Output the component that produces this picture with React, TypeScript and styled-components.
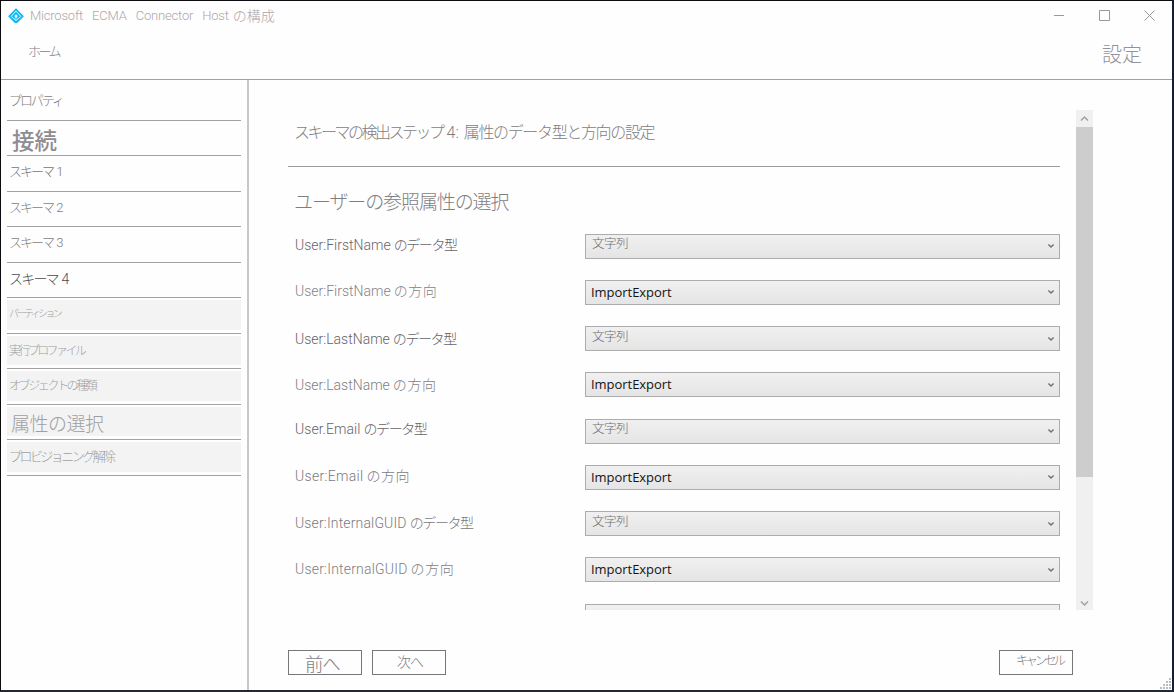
import React from 'react';
import styled, { createGlobalStyle } from 'styled-components';

const GlobalStyle = createGlobalStyle`
  * { box-sizing: border-box; }
  body { margin: 0; background: #fff; overflow: hidden; }
`;

const Window = styled.div`
  width: 1174px;
  height: 692px;
  display: flex;
  flex-direction: column;
  background: #fefefe;
  border-style: solid;
  border-width: 1px 2px 2px 1px;
  border-color: #0c0c10 #14202f #232833 #0c0c10;
  font-family: Roboto, 'Noto Sans CJK JP', sans-serif;
  color: #7f7d81;
  position: relative;
  overflow: hidden;
`;

const TitleBar = styled.header`
  display: flex;
  align-items: center;
  height: 30px;
  padding-left: 7px;
  flex: none;
`;

const AppTitle = styled.h1`
  flex: 1;
  display: flex;
  margin: 0 0 0 6px;
  font-size: 13px;
  font-weight: 300;
  line-height: 20px;
  word-spacing: 1.6px;
  color: #aea6ab;
  white-space: pre;
`;

const Caption = styled.div`
  display: flex;
  width: 135px;
  height: 28px;
  margin-bottom: 2px;
  align-items: center;
  justify-content: space-around;
`;

const MenuBar = styled.nav`
  display: flex;
  justify-content: space-between;
  height: 49px;
  padding: 0 30px 0 27px;
  border-bottom: 1px solid #a0a0a0;
  flex: none;
`;

const MenuItem = styled.span<{ $size: number; $top: number; $gap?: number; $tone: string }>`
  font-size: ${(p) => p.$size}px;
  font-weight: 300;
  line-height: 24px;
  padding-top: ${(p) => p.$top}px;
  letter-spacing: ${(p) => p.$gap ?? 0}px;
  color: ${(p) => p.$tone};
`;

const Body = styled.div`
  display: flex;
  flex: 1;
  min-height: 0;
`;

const Sidebar = styled.aside`
  width: 248px;
  padding: 5px 6px 0 6px;
  border-right: 2px solid #c8c8c8;
  flex: none;
`;

const Step = styled.div<{ $disabled?: boolean }>`
  height: 35.5px;
  border-bottom: 1px solid #a2a2a2;
  padding: ${(p) => (p.$disabled ? '2px 0 3px' : '0')};
  background: ${(p) => (p.$disabled ? '#f3f3f3' : 'transparent')};
  background-clip: content-box;
`;

const StepText = styled.div<{
  $size: number;
  $gap: number;
  $left: number;
  $lift: number;
  $tone: string;
  $bold?: boolean;
}>`
  height: 30px;
  line-height: ${(p) => 32 - p.$lift * 2}px;
  padding-left: ${(p) => p.$left}px;
  font-size: ${(p) => p.$size}px;
  font-weight: ${(p) => (p.$bold ? 500 : 300)};
  letter-spacing: ${(p) => p.$gap}px;
  word-spacing: 2px;
  color: ${(p) => p.$tone};
  white-space: pre;
`;

const Main = styled.main`
  flex: 1;
  padding: 30px 80px 0 39px;
  display: flex;
  flex-direction: column;
`;

const ScrollArea = styled.section`
  display: flex;
  height: 500px;
  width: 805px;
  flex: none;
`;

const Page = styled.div`
  width: 772px;
  height: 500px;
  overflow: hidden;
  margin-right: 16px;
`;

const PageTitle = styled.h2`
  display: flex;
  margin: 0;
  height: 57px;
  padding-left: 6px;
  line-height: 45px;
  font-size: 16px;
  font-weight: 300;
  white-space: pre;
  border-bottom: 1px solid #9c9c9c;
`;

const SectionTitle = styled.h3`
  margin: 0;
  height: 56px;
  padding: 16px 0 0 6px;
  line-height: 40px;
  font-size: 19px;
  font-weight: 300;
  letter-spacing: -1.1px;
`;

const Run = styled.span<{ $gap?: number; $left?: number; $size?: number }>`
  letter-spacing: ${(p) => p.$gap ?? 0}px;
  margin-left: ${(p) => p.$left ?? 0}px;
  ${(p) => (p.$size ? `font-size: ${p.$size}px;` : '')}
`;

const Field = styled.div`
  display: flex;
  align-items: center;
  height: 46.25px;
  padding-left: 7px;
`;

const FieldLabel = styled.label<{ $lift: number; $tone: string }>`
  display: flex;
  width: 290px;
  line-height: 20px;
  padding-bottom: ${(p) => p.$lift * 2}px;
  font-size: 14px;
  font-weight: 300;
  color: ${(p) => p.$tone};
  white-space: pre;
`;

const Combo = styled.div`
  display: flex;
  align-items: center;
  justify-content: space-between;
  width: 475px;
  height: 25px;
  padding: 0 4px 0 5px;
  border: 1px solid #acacac;
  background: linear-gradient(#f0f0f0, #e5e5e5);
`;

const TypeValue = styled.span`
  font-size: 12.5px;
  font-weight: 300;
  letter-spacing: -0.5px;
  line-height: 18px;
  padding: 0 0 4px 1px;
  color: #6d6b6f;
`;

const DirectionValue = styled.span`
  font-family: 'Open Sans', 'Noto Sans', sans-serif;
  font-size: 13px;
  letter-spacing: -0.04px;
  line-height: 20px;
  padding-bottom: 1px;
  color: #141414;
`;

const ScrollBar = styled.div`
  width: 17px;
  height: 500px;
  display: flex;
  flex-direction: column;
  background: #f0f0f0;
`;

const ScrollButton = styled.div<{ $drop?: number }>`
  height: 17px;
  padding-top: ${(p) => p.$drop ?? 0}px;
  display: flex;
  align-items: center;
  justify-content: center;
`;

const Thumb = styled.div`
  height: 350px;
  background: #cdcdcd;
`;

const Track = styled.div`
  flex: 1;
`;

const Footer = styled.footer`
  display: flex;
  gap: 10px;
  padding-top: 40px;
  width: 785px;
`;

const Button = styled.button<{ $size: number; $gap?: number; $left: number; $top: number; $end?: boolean }>`
  width: 74px;
  height: 25px;
  margin: 0 0 0 ${(p) => (p.$end ? 'auto' : '0')};
  padding: ${(p) => p.$top}px 0 0 ${(p) => p.$left}px;
  border: 1px solid #77777a;
  background: #fefefe;
  display: flex;
  align-items: flex-start;
  font-family: inherit;
  font-size: ${(p) => p.$size}px;
  font-weight: 300;
  line-height: 20px;
  letter-spacing: ${(p) => p.$gap ?? 0}px;
  color: #7f7d81;
  white-space: nowrap;
`;

const Grip = styled.svg`
  position: absolute;
  right: 1px;
  bottom: 1px;
`;

type StepData = {
  text: string;
  size: number;
  gap: number;
  left: number;
  lift: number;
  tone: string;
  bold?: boolean;
  disabled?: boolean;
};

const steps: StepData[] = [
  { text: 'プロパティ', size: 13, gap: -2.1, left: 2, lift: 0, tone: '#7f7d81' },
  { text: '接続', size: 22.5, gap: 0, left: 5, lift: -4, tone: '#8f8c92', bold: true },
  { text: 'スキーマ 1', size: 13, gap: -2, left: 2, lift: 0, tone: '#757377' },
  { text: 'スキーマ 2', size: 13, gap: -2, left: 2, lift: 0, tone: '#7f7d81' },
  { text: 'スキーマ 3', size: 13, gap: -2, left: 2, lift: 0, tone: '#7f7d81' },
  { text: 'スキーマ 4', size: 14, gap: -1.8, left: 2, lift: 0, tone: '#4c4a4e' },
  { text: 'パーティション', size: 10, gap: -2.6, left: 2, lift: 2, tone: '#a09ea2', disabled: true },
  { text: '実行プロファイル', size: 12, gap: -2.6, left: 2, lift: 1, tone: '#a09ea2', disabled: true },
  { text: 'オブジェクトの種類', size: 12, gap: -2.4, left: 2, lift: 1, tone: '#a09ea2', disabled: true },
  { text: '属性の選択', size: 19, gap: -0.5, left: 4, lift: -2, tone: '#a09ea2', disabled: true },
  { text: 'プロビジョニング解除', size: 13, gap: -2.55, left: 2, lift: 1, tone: '#a09ea2', disabled: true },
];

type FieldData = { name: string; gap: number; kind: 'type' | 'direction'; lift: number; tone: string };

const fields: FieldData[] = [
  { name: 'User:FirstName', gap: 0, kind: 'type', lift: 1, tone: '#67656a' },
  { name: 'User:FirstName', gap: 0, kind: 'direction', lift: 1, tone: '#858387' },
  { name: 'User:LastName', gap: 0, kind: 'type', lift: 0, tone: '#656367' },
  { name: 'User:LastName', gap: 0, kind: 'direction', lift: 0, tone: '#7f7d81' },
  { name: 'User.Email', gap: 0.05, kind: 'type', lift: 2, tone: '#656367' },
  { name: 'User:Email', gap: 0.3, kind: 'direction', lift: 1, tone: '#7b797d' },
  { name: 'User:InternalGUID', gap: 0.15, kind: 'type', lift: 0.5, tone: '#7b797d' },
  { name: 'User:InternalGUID', gap: 0.2, kind: 'direction', lift: 0.5, tone: '#7f7d81' },
];

const Logo = () => (
  <svg width="16" height="16" viewBox="0 0 16 16">
    <path d="M8 .3 15.9 8.2 10 14.3Q8 16 6 14.3L.1 8.2Z" fill="#12b8f0" />
    <path d="M8 3 12.8 8.4 8 12.4 3.2 8.4Z" fill="none" stroke="#d8f6ff" strokeWidth="1" />
    <path d="M8 9V12.4" stroke="#d8f6ff" strokeWidth=".8" />
    <circle cx="8" cy="7.9" r="1.5" fill="#d8f6ff" />
  </svg>
);

const Arrow = () => (
  <svg width="8" height="6" viewBox="0 0 8 6">
    <path d="M1.4 1.5 4 4 6.6 1.5" fill="none" stroke="#707070" strokeWidth="1.4" />
  </svg>
);

const Chevron = ({ up }: { up?: boolean }) => (
  <svg width="9" height="7" viewBox="0 0 9 7">
    <path d={up ? 'M1 5.5 4.5 2 8 5.5' : 'M1 1.5 4.5 5 8 1.5'} fill="none" stroke="#a0a0a0" strokeWidth="1.5" />
  </svg>
);

export default function App() {
  return (
    <>
      <GlobalStyle />
      <Window>
        <TitleBar>
          <Logo />
          <AppTitle>
            <Run $gap={-0.2}>{'Microsoft  ECMA  Connector  Host'}</Run>
            <Run $size={14} $left={4}>の構成</Run>
          </AppTitle>
          <Caption>
            <svg width="11" height="11"><path d="M0 5.5H10" stroke="#999" /></svg>
            <svg width="11" height="11"><path d="M.5 .5H10.5V10.5H.5Z" fill="none" stroke="#999" /></svg>
            <svg width="11" height="11"><path d="M.5 .5 10.5 10.5M10.5 .5 .5 10.5" fill="none" stroke="#999" /></svg>
          </Caption>
        </TitleBar>
        <MenuBar>
          <MenuItem $size={13} $top={9} $gap={-2.6} $tone="#7f7d81">ホーム</MenuItem>
          <MenuItem $size={20} $top={12} $tone="#949298">設定</MenuItem>
        </MenuBar>
        <Body>
          <Sidebar>
            {steps.map((s) => (
              <Step key={s.text} $disabled={s.disabled}>
                <StepText $size={s.size} $gap={s.gap} $left={s.left} $lift={s.lift} $tone={s.tone} $bold={s.bold}>
                  {s.text}
                </StepText>
              </Step>
            ))}
          </Sidebar>
          <Main>
            <ScrollArea>
              <Page>
                <PageTitle>
                  <Run $gap={-2.5}>スキーマの検出ステップ</Run>
                  <Run $left={4} $size={16}>4:</Run>
                  <Run $left={5} $gap={-1.35}>属性のデータ型と方向の設定</Run>
                </PageTitle>
                <SectionTitle>ユーザーの参照属性の選択</SectionTitle>
                {fields.map((f) => (
                  <Field key={f.name + f.kind}>
                    <FieldLabel $lift={f.lift} $tone={f.tone}>
                      <Run $gap={f.gap}>{f.name}</Run>
                      <Run $left={3} $size={14} $gap={f.kind === 'type' ? -1.4 : 0.6}>
                        {f.kind === 'type' ? 'のデータ型' : 'の方向'}
                      </Run>
                    </FieldLabel>
                    <Combo>
                      {f.kind === 'type' ? (
                        <TypeValue>文字列</TypeValue>
                      ) : (
                        <DirectionValue>ImportExport</DirectionValue>
                      )}
                      <Arrow />
                    </Combo>
                  </Field>
                ))}
                <Field>
                  <FieldLabel $lift={0} $tone="#858387" />
                  <Combo />
                </Field>
              </Page>
              <ScrollBar>
                <ScrollButton><Chevron up /></ScrollButton>
                <Thumb />
                <Track />
                <ScrollButton $drop={4}><Chevron /></ScrollButton>
              </ScrollBar>
            </ScrollArea>
            <Footer>
              <Button $size={18.5} $left={16} $top={4} $gap={-1.3}>前へ</Button>
              <Button $size={14} $left={24} $top={1} $gap={-1}>次へ</Button>
              <Button $size={12.5} $left={16} $top={0} $gap={-3.1} $end>キャンセル</Button>
            </Footer>
          </Main>
        </Body>
        <Grip width="11" height="11" fill="#b9bccb">
          <path d="M9 0h2v2h-2zM6 3h2v2h-2zM9 3h2v2h-2zM3 6h2v2h-2zM6 6h2v2h-2zM9 6h2v2h-2zM0 9h2v2h-2zM3 9h2v2h-2zM6 9h2v2h-2zM9 9h2v2h-2z" />
        </Grip>
      </Window>
    </>
  );
}
